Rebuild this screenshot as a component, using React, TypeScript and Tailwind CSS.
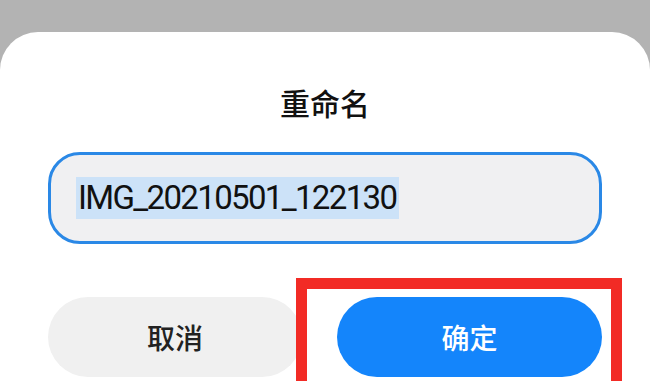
import React from "react";

export default function App() {
  const cjk = { fontFamily: '"Noto Sans CJK SC", "Noto Sans", sans-serif' };
  return (
    <div className="relative w-[650px] h-[381px] overflow-hidden bg-[#b3b3b3] pt-[32px]">
      <div className="h-[400px] bg-white rounded-t-[38px] flex flex-col">
        <div
          className="pt-[53px] text-center text-[30px] leading-[34px] font-medium text-[#111]"
          style={cjk}
        >
          重命名
        </div>
        <div className="mt-[33px] mx-[48px] h-[92px] rounded-[32px] border-[3px] border-[#2a88e6] bg-[#f0f0f2] flex items-center pl-[25px]">
          <span
            className="bg-[#cce2f8] text-[33px] leading-[42px] text-[#111] pl-[2px] pr-[3px] tracking-[-1.65px]"
            style={{ fontFamily: 'Roboto, "Noto Sans", sans-serif' }}
          >
            IMG_20210501_122130
          </span>
        </div>
        <div className="mt-[53px] mx-[48px] flex justify-between">
          <button
            className="w-[254px] h-[80px] rounded-full bg-[#f0f0f0] text-[28px] font-medium text-[#222]"
            style={cjk}
          >
            取消
          </button>
          <button
            className="w-[265px] h-[80px] rounded-full bg-[#1485fb] text-[28px] font-medium text-white"
            style={cjk}
          >
            确定
          </button>
        </div>
      </div>
      <div className="absolute left-[296px] top-[278px] w-[326px] h-[130px] border-[11px] border-[#f22b25]" />
    </div>
  );
}
